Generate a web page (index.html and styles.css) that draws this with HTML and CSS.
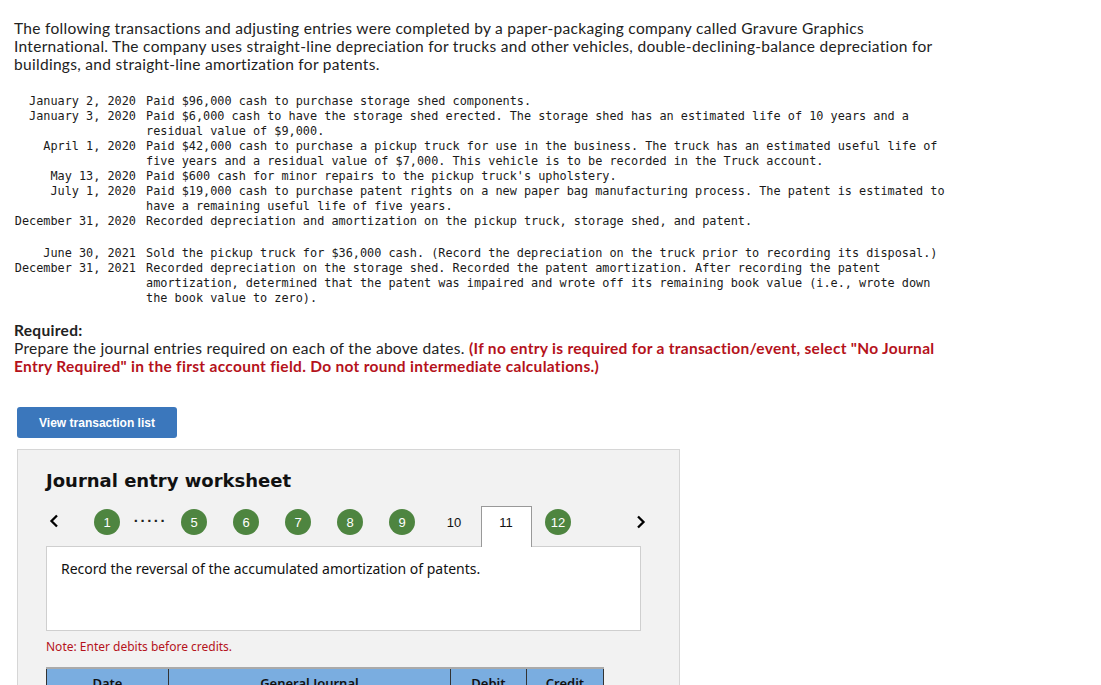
FILE: index.html
```html
<!DOCTYPE html>
<html lang="en">
<head>
    <meta charset="UTF-8">
    <meta name="viewport" content="width=device-width, initial-scale=1.0">
    <title>Journal Entry Worksheet</title>
    <link rel="stylesheet" href="styles.css">
</head>
<body>
    <div class="page">
        <p class="intro">The following transactions and adjusting entries were completed by a paper-packaging company called Gravure Graphics<br>International. The company uses straight-line depreciation for trucks and other vehicles, double-declining-balance depreciation for<br>buildings, and straight-line amortization for patents.</p>

        <!-- Transactions -->
        <div class="txn-block">
            <div class="txn-date">January 2, 2020</div>
            <div class="txn-desc">Paid $96,000 cash to purchase storage shed components.</div>
            <div class="txn-date">January 3, 2020</div>
            <div class="txn-desc">Paid $6,000 cash to have the storage shed erected. The storage shed has an estimated life of 10 years and a<br>residual value of $9,000.</div>
            <div class="txn-date">April 1, 2020</div>
            <div class="txn-desc">Paid $42,000 cash to purchase a pickup truck for use in the business. The truck has an estimated useful life of<br>five years and a residual value of $7,000. This vehicle is to be recorded in the Truck account.</div>
            <div class="txn-date">May 13, 2020</div>
            <div class="txn-desc">Paid $600 cash for minor repairs to the pickup truck's upholstery.</div>
            <div class="txn-date">July 1, 2020</div>
            <div class="txn-desc">Paid $19,000 cash to purchase patent rights on a new paper bag manufacturing process. The patent is estimated to<br>have a remaining useful life of five years.</div>
            <div class="txn-date">December 31, 2020</div>
            <div class="txn-desc">Recorded depreciation and amortization on the pickup truck, storage shed, and patent.</div>
        </div>

        <div class="txn-block second">
            <div class="txn-date">June 30, 2021</div>
            <div class="txn-desc">Sold the pickup truck for $36,000 cash. (Record the depreciation on the truck prior to recording its disposal.)</div>
            <div class="txn-date">December 31, 2021</div>
            <div class="txn-desc">Recorded depreciation on the storage shed. Recorded the patent amortization. After recording the patent<br>amortization, determined that the patent was impaired and wrote off its remaining book value (i.e., wrote down<br>the book value to zero).</div>
        </div>

        <!-- Required -->
        <div class="required">
            <strong>Required:</strong><br>
            Prepare the journal entries required on each of the above dates. <span class="warn">(If no entry is required for a transaction/event, select "No Journal<br>Entry Required" in the first account field. Do not round intermediate calculations.)</span>
        </div>

        <button class="view-btn" type="button">View transaction list</button>

        <!-- Worksheet -->
        <div class="worksheet">
            <h2 class="ws-title">Journal entry worksheet</h2>

            <div class="ws-nav">
                <span class="nav-arrow">
                    <svg width="10" height="14" viewBox="0 0 10 14"><polyline points="8,1.5 2.5,7 8,12.5" fill="none" stroke="#000" stroke-width="2.3"/></svg>
                </span>
                <span class="nav-slot"><span class="step done">1</span></span>
                <span class="nav-dots">.....</span>
                <span class="nav-slot"><span class="step done">5</span></span>
                <span class="nav-slot"><span class="step done">6</span></span>
                <span class="nav-slot"><span class="step done">7</span></span>
                <span class="nav-slot"><span class="step done">8</span></span>
                <span class="nav-slot"><span class="step done">9</span></span>
                <span class="nav-slot"><span class="step">10</span></span>
                <span class="nav-slot"><span class="step current">11</span></span>
                <span class="nav-slot"><span class="step done">12</span></span>
                <span class="nav-arrow next">
                    <svg width="10" height="14" viewBox="0 0 10 14"><polyline points="2,1.5 7.5,7 2,12.5" fill="none" stroke="#000" stroke-width="2.3"/></svg>
                </span>
            </div>

            <div class="ws-box">
                Record the reversal of the accumulated amortization of patents.
            </div>

            <p class="ws-note">Note: Enter debits before credits.</p>

            <table class="ws-table">
                <thead>
                    <tr>
                        <th class="col-date">Date</th>
                        <th class="col-journal">General Journal</th>
                        <th class="col-debit">Debit</th>
                        <th class="col-credit">Credit</th>
                    </tr>
                </thead>
                <tbody>
                    <tr><td>Dec 31, 2021</td><td></td><td></td><td></td></tr>
                    <tr><td></td><td></td><td></td><td></td></tr>
                    <tr><td></td><td></td><td></td><td></td></tr>
                </tbody>
            </table>
        </div>
    </div>
</body>
</html>
```

FILE: styles.css
```css
body {
    margin: 0;
    background: #fff;
    color: #222;
    font-family: Lato, "Liberation Sans", sans-serif;
}
.page {
    padding: 19px 0 40px 14px;
}
.intro {
    margin: 0;
    font-size: 15.5px;
    letter-spacing: 0.3px;
    line-height: 18px;
}
.txn-block {
    display: grid;
    grid-template-columns: 122px auto;
    column-gap: 10px;
    margin-top: 21px;
    font-family: "DejaVu Sans Mono", "Liberation Mono", monospace;
    font-size: 11.85px;
    line-height: 15px;
    color: #1a1a1a;
}
.txn-block.second {
    margin-top: 17px;
}
.txn-date {
    text-align: right;
    white-space: nowrap;
}
.txn-desc {
    white-space: nowrap;
}
.required {
    margin-top: 15px;
    font-size: 15.5px;
    letter-spacing: 0.3px;
    line-height: 18px;
}
.warn {
    color: #b5121b;
    font-weight: bold;
}
.view-btn {
    display: block;
    margin: 32px 0 0 3px;
    width: 160px;
    height: 31px;
    border: none;
    border-radius: 3px;
    background-color: #3b77bc;
    color: white;
    font-family: "Liberation Sans", Arial, sans-serif;
    font-weight: bold;
    font-size: 12px;
    cursor: pointer;
}
.worksheet {
    margin: 11px 0 0 3px;
    width: 663px;
    box-sizing: border-box;
    padding: 19px 0 0 28px;
    background: #f2f2f2;
    border: 1px solid #d6d6d6;
}
.ws-title {
    margin: 0;
    font-family: "DejaVu Sans", Verdana, sans-serif;
    font-size: 18px;
    line-height: 24px;
    color: #111;
}
.ws-nav {
    display: flex;
    align-items: flex-start;
    height: 40px;
    margin-top: 13px;
    font-family: "Liberation Sans", Arial, sans-serif;
    font-size: 13px;
}
.nav-arrow {
    width: 32px;
    padding: 8px 0 0 3px;
}
.nav-arrow.next {
    width: auto;
    padding-left: 52px;
    padding-top: 9px;
}
.nav-slot {
    width: 52px;
    display: flex;
    justify-content: center;
}
.nav-dots {
    width: 35px;
    text-align: center;
    font-size: 15px;
    font-weight: bold;
    letter-spacing: 2.5px;
    padding-top: 2px;
}
.step {
    display: flex;
    align-items: center;
    justify-content: center;
    width: 26px;
    height: 26px;
    margin-top: 3px;
    border-radius: 50%;
    color: #111;
}
.step.done {
    background: #4e8540;
    color: white;
}
.step.current {
    width: 51px;
    height: 41px;
    margin-top: 0;
    padding-top: 8px;
    box-sizing: border-box;
    align-items: flex-start;
    border: 1px solid #999;
    border-bottom: none;
    border-radius: 0;
    background: white;
    position: relative;
    z-index: 1;
}
.ws-box {
    width: 595px;
    height: 85px;
    box-sizing: border-box;
    padding: 13px 14px;
    background: white;
    border: 1px solid #cfcfcf;
    font-family: "Noto Sans", "DejaVu Sans", sans-serif;
    font-size: 14px;
    line-height: 18px;
    color: #111;
}
.ws-note {
    margin: 8px 0 0;
    font-family: "Noto Sans", "DejaVu Sans", sans-serif;
    font-size: 12px;
    line-height: 16px;
    color: #b5121b;
}
.ws-table {
    margin-top: 12px;
    width: 558px;
    border-collapse: collapse;
    font-family: "Noto Sans", "DejaVu Sans", sans-serif;
    font-size: 13px;
}
.ws-table th {
    height: 26px;
    background: #7aade0;
    border: 1px solid #333;
    border-top: 2px solid #aaa;
    font-weight: 600;
    color: #111;
}
.ws-table td {
    height: 30px;
    background: white;
    border: 1px solid #ccc;
    padding: 0 6px;
}
.col-date { width: 121px; }
.col-journal { width: 285px; }
.col-debit { width: 74px; }
.col-credit { width: 75px; }
```
